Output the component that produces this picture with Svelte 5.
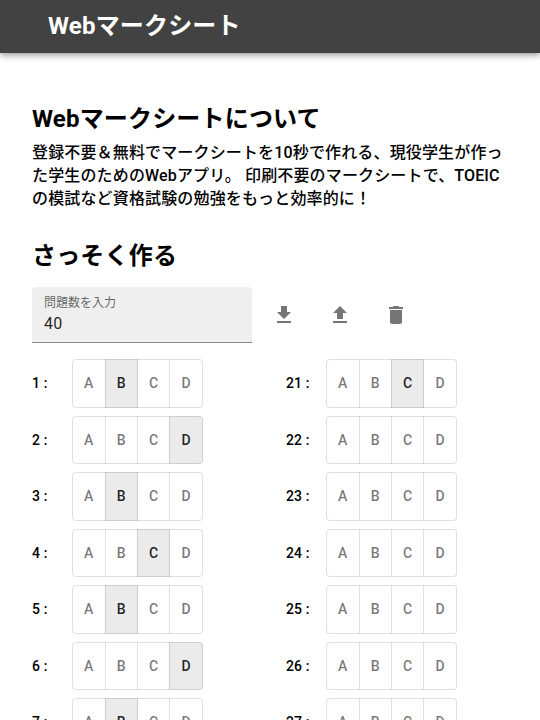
<script>
  const choices = ['A', 'B', 'C', 'D'];
  let count = $state('40');
  let answers = $state({ 1: 'B', 2: 'D', 3: 'B', 4: 'C', 5: 'B', 6: 'D', 7: 'B', 21: 'C' });

  const total = $derived(Math.max(0, Math.min(200, parseInt(count) || 0)));
  const half = $derived(Math.ceil(total / 2));
  const columns = $derived([
    Array.from({ length: half }, (_, i) => i + 1),
    Array.from({ length: total - half }, (_, i) => half + i + 1)
  ]);

  function mark(n, choice) {
    answers[n] = answers[n] === choice ? undefined : choice;
  }

  function clearAll() {
    answers = {};
  }
</script>

<header class="bar">
  <div class="brand">Webマークシート</div>
</header>

<main>
  <h2>Webマークシートについて</h2>
  <p class="lead">
    登録不要＆無料でマークシートを10秒で作れる、現役学生が作った学生のためのWebアプリ。 印刷不要のマークシートで、TOEICの模試など資格試験の勉強をもっと効率的に！
  </p>

  <h2 class="second">さっそく作る</h2>
  <div class="tools">
    <div class="field">
      <label for="count">問題数を入力</label>
      <input id="count" type="text" inputmode="numeric" bind:value={count} />
    </div>
    <button class="icon" type="button" aria-label="ダウンロード">
      <svg viewBox="0 0 24 24"><path d="M5 20h14v-2H5v2zM19 9h-4V3H9v6H5l7 7 7-7z" /></svg>
    </button>
    <button class="icon" type="button" aria-label="アップロード">
      <svg viewBox="0 0 24 24"><path d="M5 20h14v-2H5v2zm0-10h4v6h6v-6h4l-7-7-7 7z" /></svg>
    </button>
    <button class="icon" type="button" aria-label="削除" onclick={clearAll}>
      <svg viewBox="0 0 24 24"><path d="M6 19c0 1.1.9 2 2 2h8c1.1 0 2-.9 2-2V7H6v12zM19 4h-3.5l-1-1h-5l-1 1H5v2h14V4z" /></svg>
    </button>
  </div>

  <div class="sheet">
    {#each columns as column}
      <div class="column">
        {#each column as n (n)}
          <div class="question">
            <span class="number" id="q{n}">{n} :</span>
            <div class="group" role="group" aria-labelledby="q{n}">
              {#each choices as choice}
                <button
                  type="button"
                  class="choice"
                  class:selected={answers[n] === choice}
                  aria-pressed={answers[n] === choice}
                  onclick={() => mark(n, choice)}>{choice}</button>
              {/each}
            </div>
          </div>
        {/each}
      </div>
    {/each}
  </div>
</main>

<style>
  :global(body) {
    margin: 0;
    background: #fff;
    color: #000;
    font-family: Roboto, 'Noto Sans CJK JP', sans-serif;
  }

  button,
  input {
    font-family: inherit;
  }

  .bar {
    padding: 8px 48px;
    background: #424242;
    color: #fff;
    box-shadow:
      0 2px 4px -1px rgba(0, 0, 0, 0.2),
      0 4px 5px 0 rgba(0, 0, 0, 0.14),
      0 1px 10px 0 rgba(0, 0, 0, 0.12);
  }

  .brand {
    font-size: 24px;
    font-weight: 700;
    line-height: 37px;
    letter-spacing: 0.0075em;
  }

  main {
    padding: 48px 32px 32px;
  }

  h2 {
    margin: 0;
    font-size: 24px;
    font-weight: 700;
    line-height: 36px;
    letter-spacing: 0.0075em;
  }

  .second {
    margin-top: 28px;
  }

  .lead {
    margin: 4px 0 0;
    font-size: 16px;
    font-weight: 500;
    line-height: 23px;
    letter-spacing: 0.00938em;
  }

  .tools {
    display: flex;
    align-items: center;
    gap: 8px;
    margin-top: 13px;
  }

  .field {
    box-sizing: border-box;
    display: flex;
    flex-direction: column;
    width: 220px;
    height: 56px;
    padding: 7px 12px 0;
    border-bottom: 1px solid #8a8a8a;
    border-radius: 4px 4px 0 0;
    background: #efefef;
  }

  .field label {
    color: rgba(0, 0, 0, 0.6);
    font-size: 12px;
    line-height: 18px;
  }

  .field input {
    width: 100%;
    padding: 0;
    border: 0;
    outline: 0;
    background: transparent;
    color: rgba(0, 0, 0, 0.87);
    font-size: 16px;
    line-height: 24px;
    letter-spacing: 0.00938em;
  }

  .icon {
    display: flex;
    padding: 12px;
    border: 0;
    border-radius: 50%;
    background: transparent;
    color: rgba(0, 0, 0, 0.54);
    cursor: pointer;
  }

  .icon svg {
    width: 24px;
    height: 24px;
    fill: currentColor;
  }

  .sheet {
    display: grid;
    grid-template-columns: 1fr 1fr;
    gap: 32px;
    margin-top: 16px;
  }

  .column {
    display: flex;
    flex-direction: column;
    gap: 8px;
  }

  .question {
    display: flex;
    align-items: center;
  }

  .number {
    width: 40px;
    font-size: 14px;
    font-weight: 500;
    letter-spacing: 0.00714em;
  }

  .group {
    display: flex;
  }

  .choice {
    margin: 0;
    padding: 11px;
    border: 1px solid rgba(0, 0, 0, 0.12);
    background: transparent;
    color: rgba(0, 0, 0, 0.54);
    font-size: 14px;
    font-weight: 500;
    line-height: 1.75;
    letter-spacing: 0.02857em;
    cursor: pointer;
  }

  .choice:first-child {
    border-radius: 4px 0 0 4px;
  }

  .choice:last-child {
    border-radius: 0 4px 4px 0;
  }

  .choice:not(:first-child) {
    margin-left: -1px;
    border-left-color: transparent;
  }

  .choice.selected {
    background: rgba(0, 0, 0, 0.08);
    color: rgba(0, 0, 0, 0.87);
  }
</style>
